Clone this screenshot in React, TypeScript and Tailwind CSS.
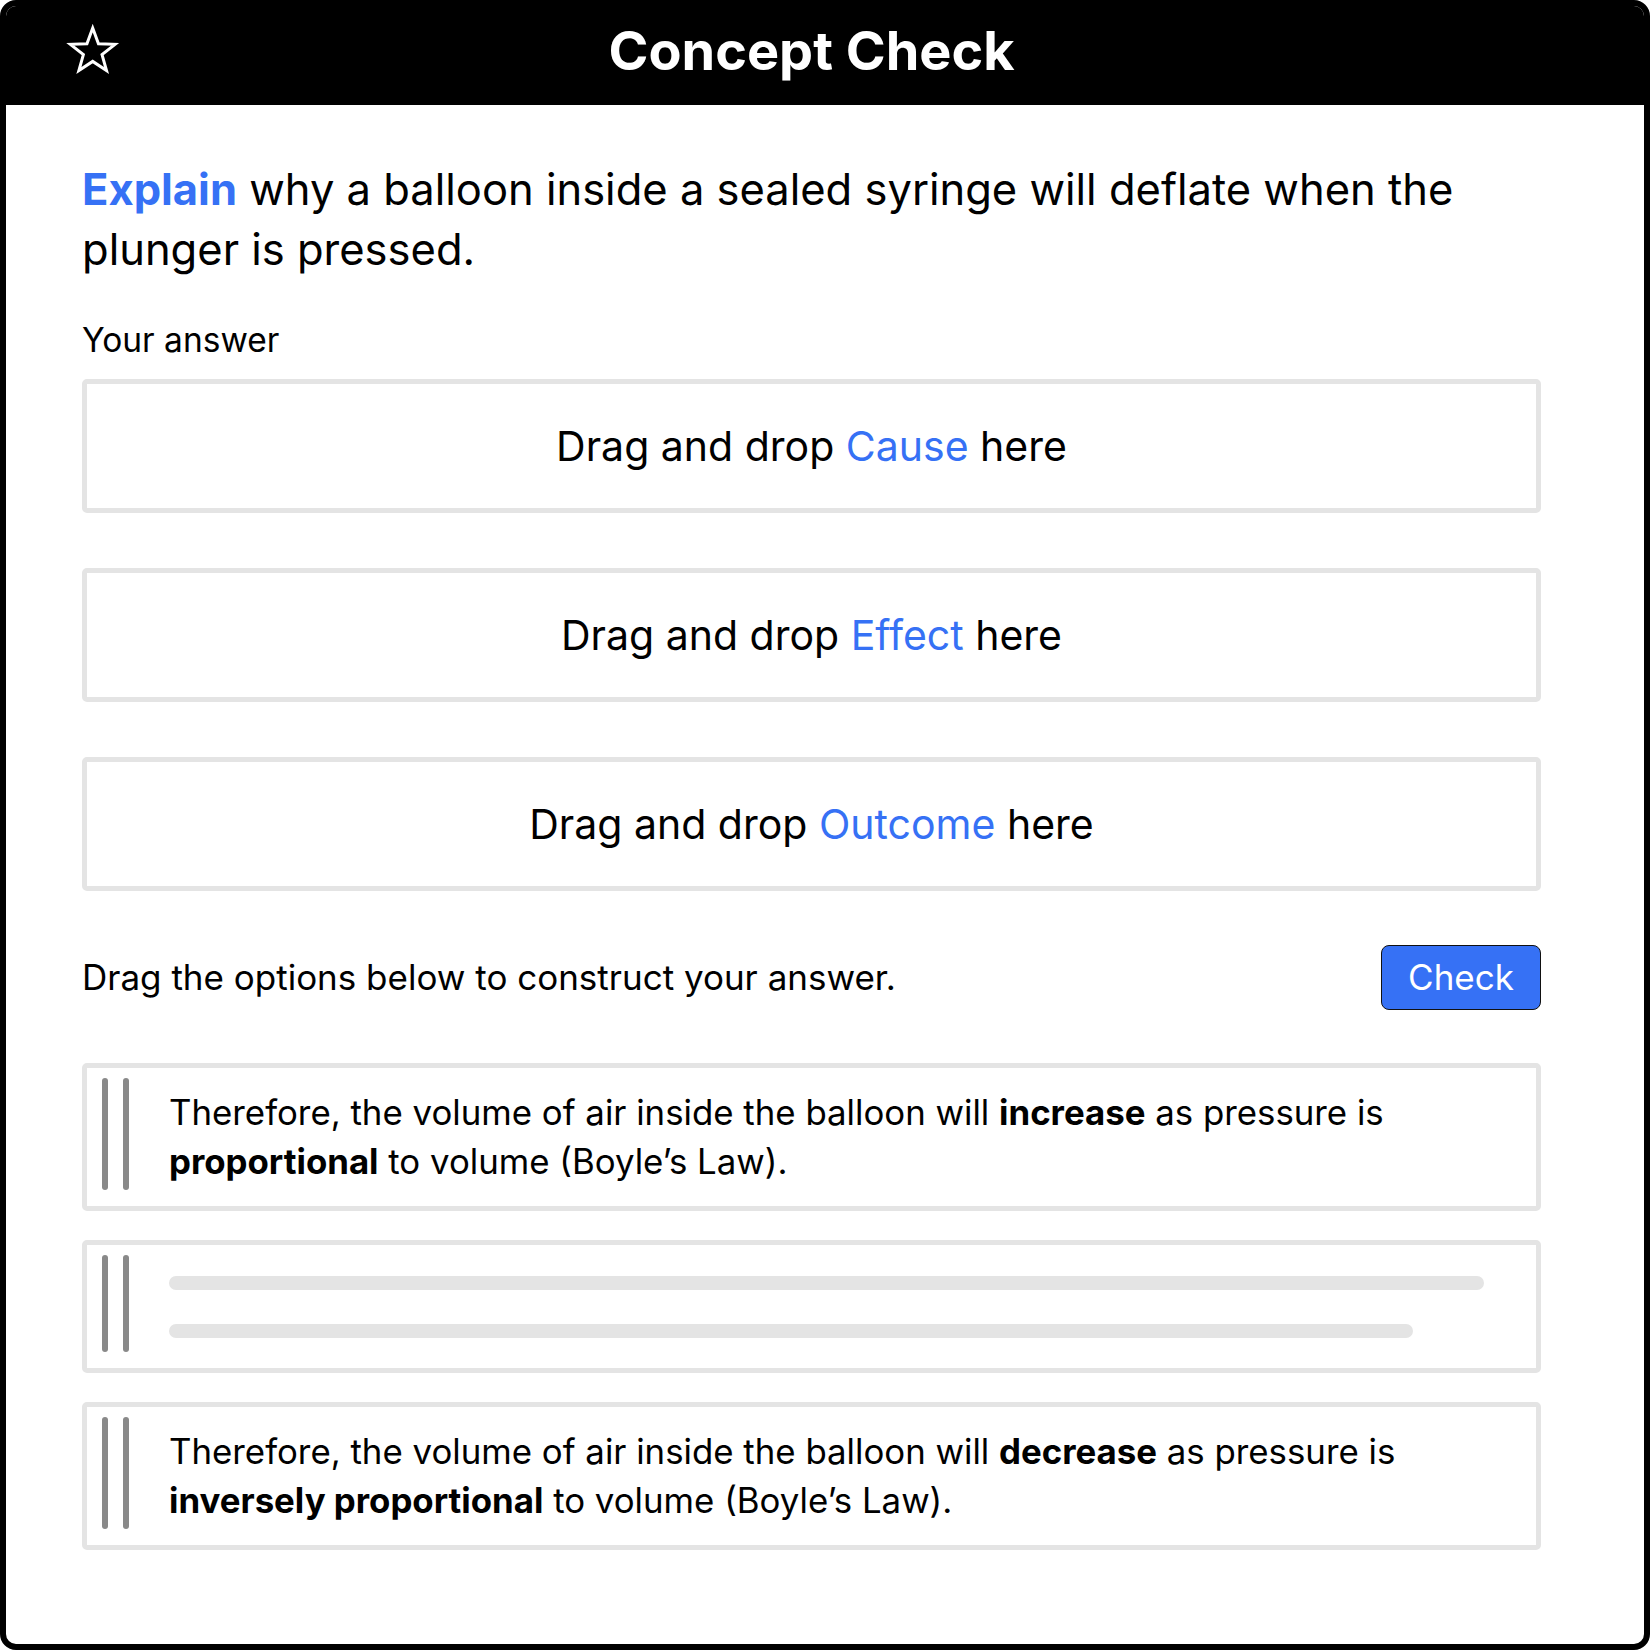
import { Fragment } from "react";

const font = { fontFamily: "Inter, 'Noto Sans', sans-serif" };

const StarIcon = () => (
  <svg width="60" height="56" viewBox="0 0 60 56" fill="none">
    <polygon
      points="29.7,7.1 35.46,22.67 52.05,23.34 39.02,33.63 43.51,49.61 29.7,40.4 15.89,49.61 20.38,33.63 7.35,23.34 23.94,22.67"
      stroke="white"
      strokeWidth="3"
      strokeLinejoin="miter"
    />
  </svg>
);

const DropZone = ({ word }: { word: string }) => (
  <div className="h-[134px] border-[5px] border-[#e4e4e4] rounded-[5px] flex items-center justify-center">
    <p className="text-[41px] leading-none text-black">
      Drag and drop <span className="text-[#3671f5]">{word}</span> here
    </p>
  </div>
);

const Grip = () => (
  <div className="flex gap-[15px] self-stretch mt-[10px] mb-[16px] ml-[15px] shrink-0">
    <div className="w-[6px] rounded-full bg-[#898989]" />
    <div className="w-[6px] rounded-full bg-[#898989]" />
  </div>
);

const OptionCard = ({ children }: { children?: React.ReactNode }) => (
  <div className="border-[5px] border-[#e4e4e4] rounded-[5px] flex">
    <Grip />
    {children}
  </div>
);

const options = [
  { word: "increase", rel: "proportional" },
  null,
  { word: "decrease", rel: "inversely proportional" },
];

export default function App() {
  return (
    <div className="w-[1650px] h-[1650px] bg-white" style={font}>
      <div className="w-full h-full border-[6px] border-black rounded-[16px] overflow-hidden relative">
        {/* header */}
        <div className="bg-black h-[99px] relative">
          <div className="absolute left-[57px] top-[15px]">
            <StarIcon />
          </div>
          <div className="ml-[76px] w-[1459px] h-full flex items-center justify-center pb-[10px]">
            <h1 className="text-white font-bold text-[54px] leading-none">Concept Check</h1>
          </div>
        </div>

        <div className="ml-[76px] w-[1459px]">
          <p className="mt-[54px] text-[43.5px] leading-[60px] text-black">
            <span className="font-bold text-[#3671f5]">Explain</span> why a balloon inside a sealed syringe will
            deflate when the plunger is pressed.
          </p>

          <p className="mt-[41px] text-[33.5px] leading-[40px] text-black">Your answer</p>

          <div className="mt-[19px] flex flex-col gap-[55px]">
            <DropZone word="Cause" />
            <DropZone word="Effect" />
            <DropZone word="Outcome" />
          </div>

          <div className="mt-[54px] flex items-center justify-between">
            <p className="text-[35px] leading-none text-black">Drag the options below to construct your answer.</p>
            <button className="w-[160px] h-[65px] bg-[#3671f5] border-[1.5px] border-[#111] rounded-[8px] text-white text-[35px] leading-none">
              Check
            </button>
          </div>

          <div className="mt-[53px] flex flex-col gap-[29px]">
            {options.map((o, i) => (
              <Fragment key={i}>
                {o ? (
                  <OptionCard>
                    <p className="pl-[40px] pr-[52px] py-[20px] text-[34.8px] leading-[49px] text-black">
                      Therefore, the volume of air inside the balloon will <b>{o.word}</b> as pressure is{" "}
                      <b>{o.rel}</b> to volume (Boyle’s Law).
                    </p>
                  </OptionCard>
                ) : (
                  <OptionCard>
                    <div className="flex-1 h-[123px] pl-[40px] pr-[52px] flex flex-col justify-center gap-[34px]">
                      <div className="h-[14px] w-full rounded-full bg-[#e4e4e4]" />
                      <div className="h-[14px] w-[1244px] rounded-full bg-[#e4e4e4]" />
                    </div>
                  </OptionCard>
                )}
              </Fragment>
            ))}
          </div>
        </div>
      </div>
    </div>
  );
}
